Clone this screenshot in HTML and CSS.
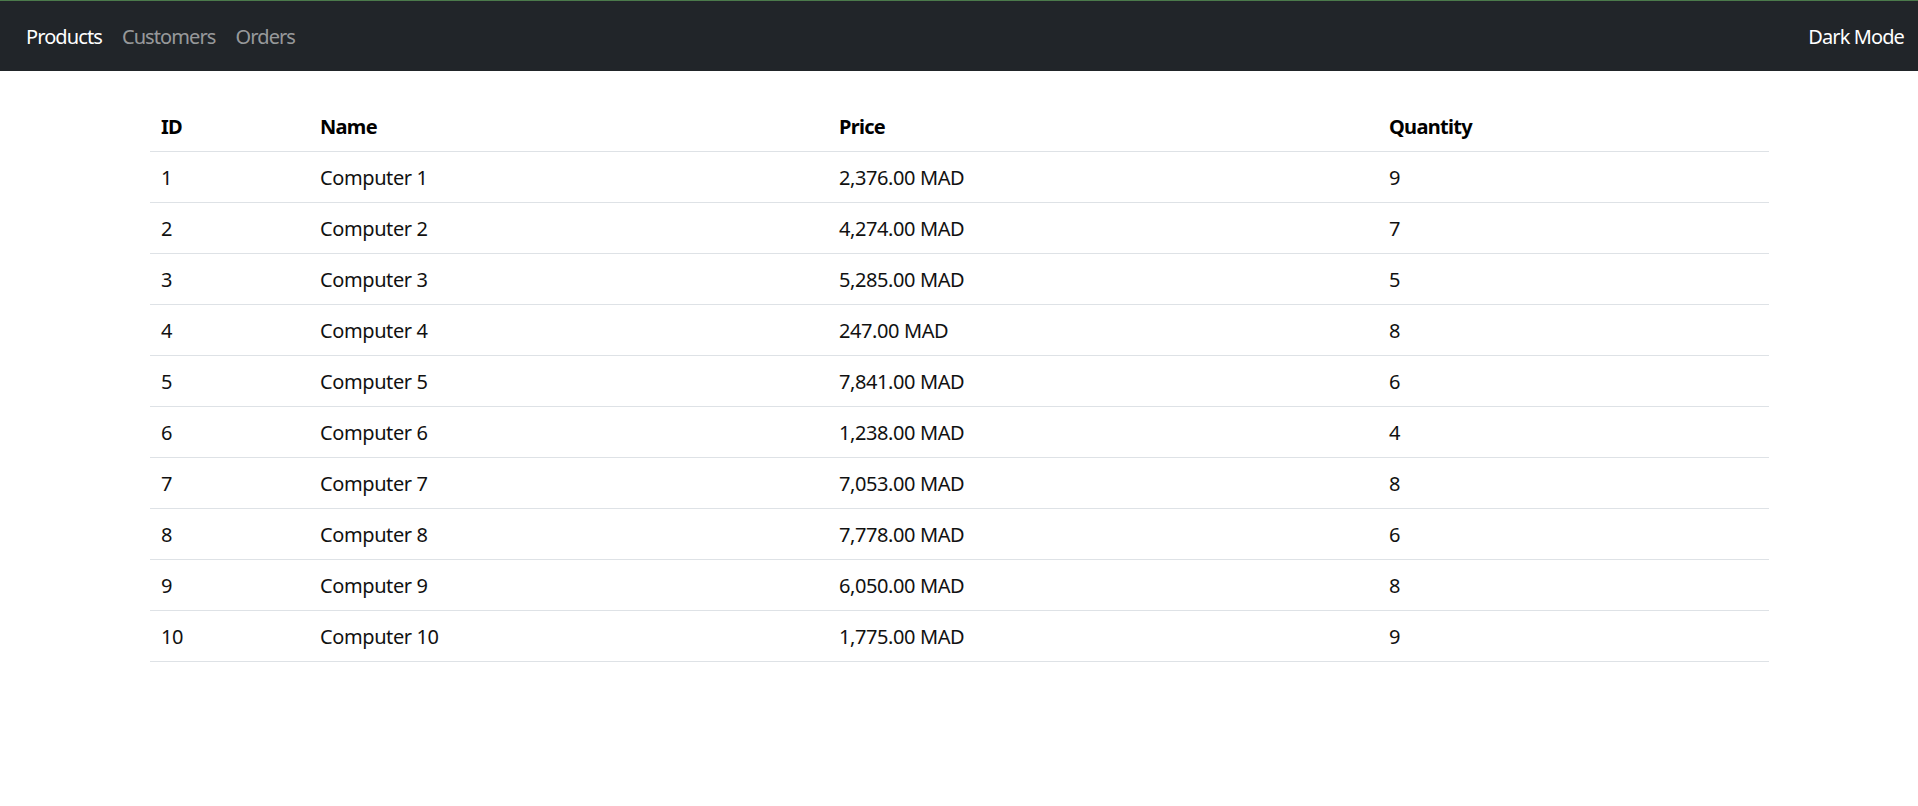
FILE: index.html
```html
<!DOCTYPE html>
<html lang="en">
<head>
<meta charset="utf-8">
<title>Products</title>
<link rel="stylesheet" href="styles.css">
</head>
<body>
<div class="topline"></div>
<nav class="navbar">
  <div class="nav-left">
    <a class="nav-link active" href="#">Products</a>
    <a class="nav-link" href="#">Customers</a>
    <a class="nav-link" href="#">Orders</a>
  </div>
  <a class="nav-link active" href="#">Dark Mode</a>
</nav>
<main class="content">
  <table class="table">
    <thead>
      <tr><th class="c-id">ID</th><th class="c-name">Name</th><th class="c-price">Price</th><th class="c-qty">Quantity</th></tr>
    </thead>
    <tbody>
      <tr><td>1</td><td>Computer 1</td><td>2,376.00 MAD</td><td>9</td></tr>
      <tr><td>2</td><td>Computer 2</td><td>4,274.00 MAD</td><td>7</td></tr>
      <tr><td>3</td><td>Computer 3</td><td>5,285.00 MAD</td><td>5</td></tr>
      <tr><td>4</td><td>Computer 4</td><td>247.00 MAD</td><td>8</td></tr>
      <tr><td>5</td><td>Computer 5</td><td>7,841.00 MAD</td><td>6</td></tr>
      <tr><td>6</td><td>Computer 6</td><td>1,238.00 MAD</td><td>4</td></tr>
      <tr><td>7</td><td>Computer 7</td><td>7,053.00 MAD</td><td>8</td></tr>
      <tr><td>8</td><td>Computer 8</td><td>7,778.00 MAD</td><td>6</td></tr>
      <tr><td>9</td><td>Computer 9</td><td>6,050.00 MAD</td><td>8</td></tr>
      <tr><td>10</td><td>Computer 10</td><td>1,775.00 MAD</td><td>9</td></tr>
    </tbody>
  </table>
</main>
</body>
</html>
```
FILE: styles.css
```css
* { box-sizing: border-box; }
html, body { margin: 0; padding: 0; }
body {
  font-family: "Noto Sans", "Open Sans", sans-serif;
  font-size: 20px;
  color: #212529;
  background: #fff;
}
.topline { height: 1px; background: #4b7a4b; }
.navbar {
  height: 70px;
  background: #212529;
  display: flex;
  align-items: center;
  justify-content: space-between;
  padding: 0 4px 0 16px;
}
.nav-left { display: flex; align-items: center; }
.nav-link {
  color: rgba(255,255,255,0.55);
  text-decoration: none;
  padding: 0 10px;
  letter-spacing: -0.9px;
}
.nav-link.active { color: #fff; }
.content {
  padding: 29px 149px 0 150px;
}
.table {
  width: 100%;
  border-collapse: collapse;
  table-layout: fixed;
}
.table th, .table td {
  height: 51px;
  padding: 2px 11px 0;
  text-align: left;
  border-bottom: 1px solid #dee2e6;
  letter-spacing: -0.4px;
  vertical-align: middle;
}
.table th { font-weight: 700; color: #000; letter-spacing: -0.7px; }
.table td { color: #111; }
.c-id { width: 159px; }
.c-name { width: 519px; }
.c-price { width: 550px; }
```
